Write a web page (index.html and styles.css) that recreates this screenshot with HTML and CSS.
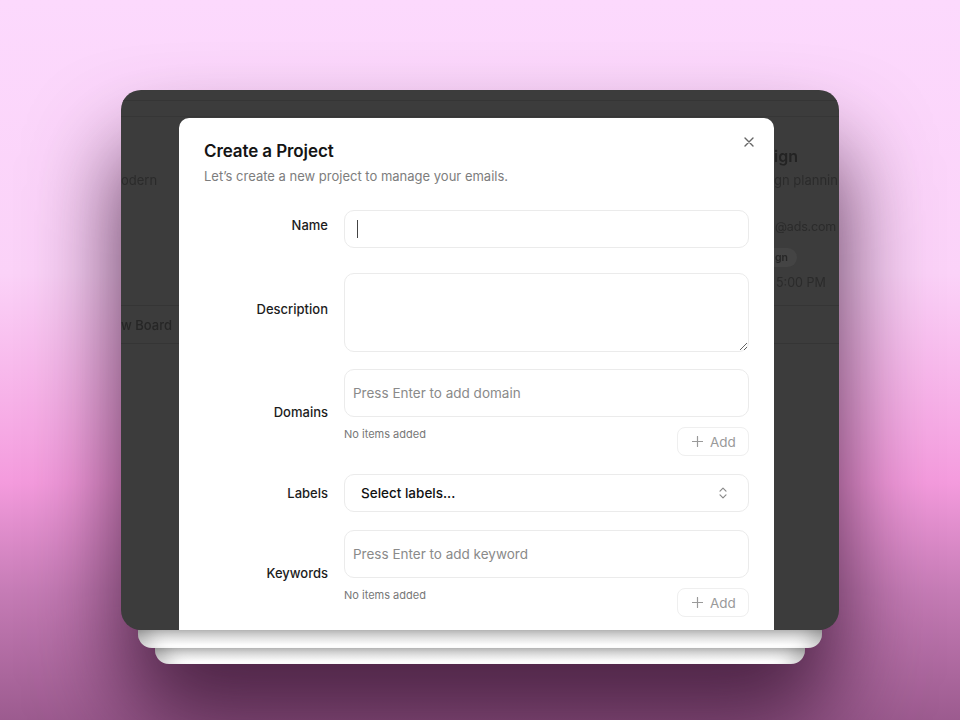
FILE: index.html
```html
<!DOCTYPE html>
<html lang="en">
<head>
<meta charset="utf-8">
<title>Create a Project</title>
<link rel="stylesheet" href="styles.css">
</head>
<body>
<main class="scene">
  <div class="stack">
    <div class="window">
      <div class="app">
        <div class="app-topbar"></div>
        <div class="app-toolbar"></div>
        <div class="app-board">
          <div class="bcard bcard-left">
            <p class="bcard-desc">odern</p>
          </div>
          <div class="bcard bcard-right">
            <p class="bcard-title">ign</p>
            <p class="bcard-desc">gn plannin</p>
            <p class="bcard-mail">@ads.com</p>
            <span class="bcard-tag">gn</span>
            <p class="bcard-time">5:00 PM</p>
          </div>
        </div>
        <div class="app-row"><span class="app-row-btn">w Board</span></div>
      </div>

      <section class="modal">
        <header class="modal-head">
          <div>
            <h1 class="modal-title">Create a Project</h1>
            <p class="modal-sub">Let’s create a new project to manage your emails.</p>
          </div>
          <button class="close" aria-label="Close">
            <svg width="10" height="10" viewBox="0 0 10 10"><path d="M1 1L9 9M9 1L1 9" stroke="#666" stroke-width="1.4" stroke-linecap="round"/></svg>
          </button>
        </header>

        <form class="form">
          <div class="row row-name">
            <label class="lbl lbl-up">Name</label>
            <div class="box box-short"><span class="caret"></span></div>
          </div>

          <div class="row row-desc">
            <label class="lbl lbl-up">Description</label>
            <textarea class="box box-area"></textarea>
          </div>

          <div class="row">
            <label class="lbl lbl-group">Domains</label>
            <div class="group">
              <input class="box box-tall" type="text" placeholder="Press Enter to add domain">
              <div class="helper">
                <span class="helper-text">No items added</span>
                <button type="button" class="add">
                  <svg width="11" height="11" viewBox="0 0 11 11"><path d="M5.5 0.5V10.5M0.5 5.5H10.5" stroke="#9a9a9a" stroke-width="1.2" stroke-linecap="round"/></svg>
                  <span>Add</span>
                </button>
              </div>
            </div>
          </div>

          <div class="row">
            <label class="lbl">Labels</label>
            <div class="box box-short select">
              <span>Select labels...</span>
              <svg width="8" height="12" viewBox="0 0 8 12"><path d="M1 4.2L4 1.2L7 4.2M1 7.8L4 10.8L7 7.8" fill="none" stroke="#8a8a8a" stroke-width="1.2" stroke-linecap="round" stroke-linejoin="round"/></svg>
            </div>
          </div>

          <div class="row">
            <label class="lbl lbl-group">Keywords</label>
            <div class="group">
              <input class="box box-tall" type="text" placeholder="Press Enter to add keyword">
              <div class="helper">
                <span class="helper-text">No items added</span>
                <button type="button" class="add">
                  <svg width="11" height="11" viewBox="0 0 11 11"><path d="M5.5 0.5V10.5M0.5 5.5H10.5" stroke="#9a9a9a" stroke-width="1.2" stroke-linecap="round"/></svg>
                  <span>Add</span>
                </button>
              </div>
            </div>
          </div>
        </form>
      </section>
    </div>
    <div class="layer layer-1"></div>
    <div class="layer layer-2"></div>
  </div>
</main>
</body>
</html>
```

FILE: styles.css
```css
* { box-sizing: border-box; }

html, body {
  margin: 0;
  height: 100%;
}

body {
  font-family: Inter, "Noto Sans", sans-serif;
  background: linear-gradient(180deg, #fcd9fd 0%, #fbd2f8 38%, #f6a9e4 60%, #f49bdd 67%, #c67cb6 82%, #9c5b8f 100%);
  overflow: hidden;
}

.scene {
  height: 720px;
  display: flex;
  justify-content: center;
  padding-top: 90px;
}

.stack {
  width: 718px;
  display: flex;
  flex-direction: column;
  align-items: center;
  filter: drop-shadow(0 60px 45px rgba(58, 22, 52, 0.85));
}

.window {
  position: relative;
  width: 718px;
  height: 540px;
  border-radius: 20px;
  background: #3c3c3c;
  overflow: hidden;
}

/* dimmed application behind the dialog */
.app {
  display: flex;
  flex-direction: column;
  color: #2b2b2b;
}

.app-topbar {
  height: 11px;
  border-bottom: 1px solid #353535;
}

.app-toolbar {
  height: 16px;
  border-bottom: 1px solid #363636;
}

.app-board {
  height: 189px;
  display: flex;
  justify-content: space-between;
  border-bottom: 1px solid #353535;
}

.bcard p { margin: 0; white-space: nowrap; }

.bcard-left {
  padding-top: 50px;
  font-size: 13px;
}

.bcard-right {
  width: 65px;
  padding-top: 28px;
  display: flex;
  flex-direction: column;
  align-items: flex-start;
}

.bcard-title {
  font-size: 16px;
  font-weight: 600;
  line-height: 22px;
  color: #232323;
}

.bcard-desc {
  font-size: 13px;
  line-height: 18px;
  margin-top: 4px !important;
}

.bcard-mail {
  font-size: 12.5px;
  line-height: 18px;
  margin-top: 29px !important;
  padding-left: 1px;
  letter-spacing: -0.2px;
}

.bcard-tag {
  margin-top: 12px;
  padding: 0 9px 0 1px;
  height: 19px;
  line-height: 19px;
  border-radius: 0 10px 10px 0;
  background: #444;
  font-size: 10.5px;
  font-weight: 600;
  color: #262626;
}

.bcard-time {
  font-size: 12.5px;
  line-height: 18px;
  margin-top: 7px !important;
  padding-left: 2px;
}

.app-row {
  height: 38px;
  border-bottom: 1px solid #353535;
  display: flex;
  align-items: center;
}

.app-row-btn {
  font-size: 13px;
  font-weight: 500;
  color: #262626;
}

/* dialog */
.modal {
  position: absolute;
  left: 58px;
  top: 28px;
  width: 595px;
  height: 560px;
  background: #fff;
  border-radius: 10px;
  padding: 22px 25px 0;
}

.modal-head {
  display: flex;
  justify-content: space-between;
  align-items: flex-start;
}

.modal-title {
  margin: 0;
  font-size: 17px;
  line-height: 22px;
  font-weight: 600;
  color: #141414;
  letter-spacing: -0.1px;
}

.modal-sub {
  margin: 5px 0 0;
  font-size: 13px;
  line-height: 18px;
  color: #7d7d7d;
}

.close {
  margin: -3px -5px 0 0;
  padding: 0;
  width: 10px;
  height: 10px;
  border: 0;
  background: none;
  display: flex;
}

.form {
  margin-top: 25px;
  display: flex;
  flex-direction: column;
  gap: 18px;
}

.row {
  display: grid;
  grid-template-columns: 124px 405px;
  column-gap: 16px;
  align-items: center;
}

.row-name { margin-bottom: 7px; }
.row-desc { margin-bottom: -1px; }

.lbl {
  text-align: right;
  font-size: 13px;
  line-height: 18px;
  font-weight: 500;
  color: #1c1c1c;
}

.lbl-up { margin-bottom: 8px; }
.lbl-group { margin-bottom: 1px; }

.box {
  width: 100%;
  border: 1px solid #ebebeb;
  border-radius: 10px;
  background: #fff;
  font-family: inherit;
  font-size: 13.5px;
  color: #111;
  outline: none;
  margin: 0;
}

.box-short {
  height: 38px;
  display: flex;
  align-items: center;
  padding: 0 12px;
}

.caret {
  width: 1px;
  height: 18px;
  background: #444;
}

.box-area {
  height: 79px;
  resize: vertical;
  display: block;
  padding: 8px;
}

.box-tall {
  height: 48px;
  padding: 0 8px;
}

.box-tall::placeholder {
  color: #8a8a8a;
}

.group {
  display: flex;
  flex-direction: column;
}

.helper {
  margin-top: 10px;
  display: flex;
  justify-content: space-between;
  align-items: flex-start;
}

.helper-text {
  font-size: 11px;
  line-height: 14px;
  color: #777;
}

.add {
  width: 72px;
  height: 29px;
  border: 1px solid #efefef;
  border-radius: 8px;
  background: #fff;
  display: flex;
  align-items: center;
  gap: 7px;
  padding: 0 0 0 14px;
  font-family: inherit;
  font-size: 13.5px;
  color: #9a9a9a;
}

.select {
  padding: 0 21px 0 16px;
  justify-content: space-between;
  font-weight: 500;
}

/* stacked sheets below the window */
.layer {
  background: linear-gradient(180deg, #b8b8b8 0%, #e2e2e2 45%, #ffffff 85%);
  box-shadow: inset 24px 0 18px -14px rgba(0, 0, 0, 0.2), inset -24px 0 18px -14px rgba(0, 0, 0, 0.2);
}

.layer-1 {
  width: 684px;
  height: 18px;
  border-radius: 0 0 14px 14px;
}

.layer-2 {
  width: 650px;
  height: 16px;
  border-radius: 0 0 14px 14px;
}
```
